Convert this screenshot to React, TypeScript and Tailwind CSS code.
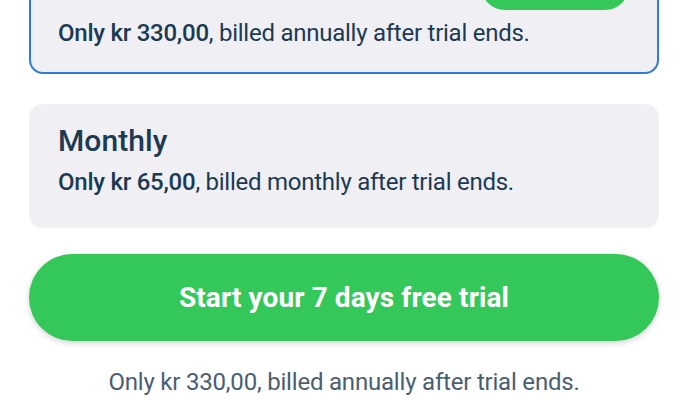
export default function App() {
  return (
    <div className="w-[688px] h-[400px] overflow-hidden bg-white" style={{ fontFamily: "Roboto, 'Noto Sans', sans-serif" }}>
      <div className="px-[29px] flex flex-col">
        <div className="-mt-[90px] h-[164px] rounded-[14px] border-2 border-[#2f7bd6] bg-[#efeff4] px-[27px] pt-[22px] flex flex-col">
          <div className="flex items-start justify-end h-[76px]">
            <div className="mt-[28px] mr-[1px] w-[148px] h-[48px] rounded-full bg-[#34c759]" />
          </div>
          <div className="text-[24px] tracking-[-0.25px] text-[#1c3a52] leading-none mt-[11px]">
            <span className="font-medium">Only kr 330,00</span>, billed annually after trial ends.
          </div>
        </div>

        <div className="mt-[30px] h-[124px] rounded-[14px] bg-[#efeff4] px-[29px] pt-[22px] flex flex-col">
          <div className="text-[30px] font-medium text-[#1c3a52] leading-none tracking-[0.1px]">Monthly</div>
          <div className="text-[24px] tracking-[-0.25px] text-[#1c3a52] leading-none mt-[14px]">
            <span className="font-medium">Only kr 65,00</span>, billed monthly after trial ends.
          </div>
        </div>

        <button className="mt-[26px] h-[87px] w-full rounded-full bg-[#34c759] text-white text-[28px] font-bold tracking-[0.1px] shadow-[0_2px_6px_rgba(0,0,0,0.18)] flex items-center justify-center">
          Start your 7 days free trial
        </button>

        <div className="mt-[29px] text-center text-[24px] tracking-[-0.2px] text-[#4b5e6f] leading-none">
          Only kr 330,00, billed annually after trial ends.
        </div>
      </div>
    </div>
  );
}
